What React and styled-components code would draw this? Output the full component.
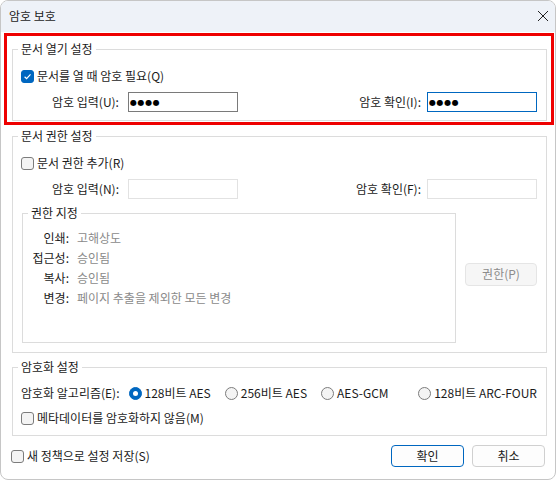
import React from 'react';
import styled, { createGlobalStyle } from 'styled-components';

const Global = createGlobalStyle`
  html, body { margin: 0; padding: 0; background: #ffffff; }
  body {
    font-family: "Noto Sans CJK KR", "Noto Sans", sans-serif;
    font-size: 12px;
    color: #1b1b1b;
  }
  * { box-sizing: border-box; }
`;

const Window = styled.div`
  position: relative;
  width: 556px;
  height: 480px;
  border: 1px solid #c6c6c6;
  border-radius: 8px;
  overflow: hidden;
  background: #ffffff;
  display: flex;
  flex-direction: column;
`;

const TitleBar = styled.div`
  height: 31px;
  flex: none;
  background: #eef2f8;
  display: flex;
  align-items: center;
  justify-content: space-between;
  padding: 0 6px 0 8px;
  font-size: 12px;
  line-height: 16px;
  color: #1b1b1b;
`;

const Title = styled.span`
  margin-top: -1px;
`;

const CloseIcon = () => (
  <svg width="12" height="12" viewBox="0 0 12 12" style={{ marginTop: -2 }}>
    <path d="M1 1 L11 11 M11 1 L1 11" stroke="#222" strokeWidth="1" fill="none" />
  </svg>
);

const Body = styled.div`
  display: flex;
  flex-direction: column;
  padding: 9px 8px 0 11px;
`;

const Group = styled.fieldset`
  margin: ${p => p.$mt || 0}px 0 0 ${p => p.$ml || 0}px;
  border: 1px solid #dcdcdc;
  padding: ${p => p.$pt}px 9px ${p => p.$pb}px 8px;
  min-width: 0;
  width: ${p => (p.$w ? `${p.$w}px` : 'auto')};
  display: flex;
  flex-direction: column;
`;

const Legend = styled.legend`
  margin-left: -3px;
  padding: 0 3px;
  font-size: 12px;
  line-height: 16px;
  color: #1b1b1b;
`;

const Row = styled.div`
  height: 20px;
  margin-top: ${p => p.$mt || 0}px;
  display: flex;
  align-items: center;
  justify-content: ${p => p.$justify || 'flex-start'};
  line-height: 16px;
  white-space: nowrap;
`;

const BoxLabel = styled.label`
  display: flex;
  align-items: center;
  gap: 3px;
  margin-left: ${p => p.$ml || 0}px;
  color: ${p => (p.$muted ? '#8a8a8a' : '#1b1b1b')};
`;

const CheckBox = styled.span`
  width: 13px;
  height: 13px;
  border-radius: 3px;
  flex: none;
  display: inline-flex;
  align-items: center;
  justify-content: center;
  background: ${p => (p.$on ? '#0067c0' : '#f4f4f4')};
  border: 1px solid ${p => (p.$on ? '#0067c0' : '#7c7c7c')};
`;

const Check = ({ on }) => (
  <CheckBox $on={on}>
    {on && (
      <svg width="9" height="9" viewBox="0 0 9 9">
        <path d="M1.6 4.7 L3.6 6.6 L7.5 2.4" stroke="#fff" strokeWidth="1.2" fill="none" />
      </svg>
    )}
  </CheckBox>
);

const RadioDot = styled.span`
  width: 13px;
  height: 13px;
  border-radius: 50%;
  flex: none;
  display: inline-flex;
  align-items: center;
  justify-content: center;
  background: ${p => (p.$on ? '#0067c0' : '#f4f4f4')};
  border: 1px solid ${p => (p.$on ? '#0067c0' : '#7c7c7c')};
  &::after {
    content: '';
    display: ${p => (p.$on ? 'block' : 'none')};
    width: 5px;
    height: 5px;
    border-radius: 50%;
    background: #ffffff;
  }
`;

const FieldPair = styled.div`
  display: flex;
  align-items: center;
  padding-left: ${p => p.$pl || 0}px;
`;

const FieldLabel = styled.span`
  width: ${p => (p.$w ? `${p.$w}px` : 'auto')};
  margin-right: ${p => p.$gap || 0}px;
`;

const Input = styled.input`
  width: 110px;
  height: 20px;
  margin: 0;
  padding: 0 0 0 1px;
  border: 1px solid ${p => (p.$focus ? '#0067c0' : p.disabled ? '#e2e2e2' : '#7a7a7a')};
  background: #ffffff;
  font-family: "DejaVu Sans", sans-serif;
  font-size: 8px;
  letter-spacing: 0.6px;
  color: #000000;
  outline: none;
`;

const PermArea = styled.div`
  margin-top: 6px;
  display: flex;
  align-items: center;
  justify-content: space-between;
`;

const PermGrid = styled.div`
  display: grid;
  grid-template-columns: 38px auto;
  grid-auto-rows: 20px;
  column-gap: 8px;
  align-items: center;
  line-height: 16px;
  white-space: nowrap;
`;

const PermKey = styled.span`
  text-align: right;
  color: #1b1b1b;
`;

const PermValue = styled.span`
  color: #8a8a8a;
`;

const Button = styled.button`
  width: ${p => p.$w || 73}px;
  height: ${p => p.$h || 22}px;
  margin: 0;
  padding: 0 0 1px;
  border-radius: 4px;
  border: 1px solid ${p => (p.$primary ? '#0067c0' : p.disabled ? '#e5e5e5' : '#d0d0d0')};
  background: ${p => (p.disabled ? '#f6f6f6' : '#fdfdfd')};
  color: ${p => (p.disabled ? '#8c8c8c' : '#1b1b1b')};
  font-family: "Noto Sans CJK KR", "Noto Sans", sans-serif;
  font-size: 12px;
  line-height: 16px;
`;

const RadioGroup = styled.div`
  flex: 1;
  display: flex;
  align-items: center;
  gap: 14px;
  margin-left: 9px;
  & > :last-child { margin-left: auto; }
`;

const Footer = styled.div`
  margin-top: 9px;
  padding: 0 10px 0 10px;
  height: 22px;
  display: flex;
  align-items: center;
  justify-content: space-between;
  line-height: 16px;
  white-space: nowrap;
`;

const Buttons = styled.div`
  display: flex;
  gap: 8px;
`;

const Highlight = styled.div`
  position: absolute;
  left: 3px;
  top: 32px;
  width: 550px;
  height: 92px;
  border: 3px solid #ee0000;
  pointer-events: none;
`;

const perms = [
  ['인쇄:', '고해상도'],
  ['접근성:', '승인됨'],
  ['복사:', '승인됨'],
  ['변경:', '페이지 추출을 제외한 모든 변경'],
];

const radios = [
  ['128비트 AES', true],
  ['256비트 AES', false],
  ['AES-GCM', false],
  ['128비트 ARC-FOUR', false],
];

export default function App() {
  return (
    <>
      <Global />
      <Window>
        <TitleBar>
          <Title>암호 보호</Title>
          <CloseIcon />
        </TitleBar>
        <Body>
          <Group $pt={9} $pb={8}>
            <Legend>문서 열기 설정</Legend>
            <Row>
              <BoxLabel>
                <Check on />
                문서를 열 때 암호 필요(Q)
              </BoxLabel>
            </Row>
            <Row $mt={6} $justify="space-between">
              <FieldPair $pl={31}>
                <FieldLabel $w={76}>암호 입력(U):</FieldLabel>
                <Input readOnly value="●●●●" />
              </FieldPair>
              <FieldPair>
                <FieldLabel $gap={6}>암호 확인(I):</FieldLabel>
                <Input readOnly value="●●●●" $focus />
              </FieldPair>
            </Row>
          </Group>

          <Group $mt={7} $pt={9} $pb={9}>
            <Legend>문서 권한 설정</Legend>
            <Row>
              <BoxLabel>
                <Check />
                문서 권한 추가(R)
              </BoxLabel>
            </Row>
            <Row $mt={6} $justify="space-between">
              <FieldPair $pl={31}>
                <FieldLabel $w={76}>암호 입력(N):</FieldLabel>
                <Input disabled value="" />
              </FieldPair>
              <FieldPair>
                <FieldLabel $gap={6}>암호 확인(F):</FieldLabel>
                <Input disabled value="" />
              </FieldPair>
            </Row>
            <PermArea>
              <Group $ml={1} $w={434} $pt={7} $pb={34}>
                <Legend>권한 지정</Legend>
                <PermGrid>
                  {perms.map(([k, v]) => (
                    <React.Fragment key={k}>
                      <PermKey>{k}</PermKey>
                      <PermValue>{v}</PermValue>
                    </React.Fragment>
                  ))}
                </PermGrid>
              </Group>
              <Button disabled $w={72} $h={23}>권한(P)</Button>
            </PermArea>
          </Group>

          <Group $mt={6} $pt={8} $pb={7}>
            <Legend>암호화 설정</Legend>
            <Row>
              <span>암호화 알고리즘(E):</span>
              <RadioGroup>
                {radios.map(([t, on]) => (
                  <BoxLabel key={t}>
                    <RadioDot $on={on} />
                    {t}
                  </BoxLabel>
                ))}
              </RadioGroup>
            </Row>
            <Row $mt={5}>
              <BoxLabel>
                <Check />
                메타데이터를 암호화하지 않음(M)
              </BoxLabel>
            </Row>
          </Group>
        </Body>
        <Footer>
          <BoxLabel>
            <Check />
            새 정책으로 설정 저장(S)
          </BoxLabel>
          <Buttons>
            <Button $primary>확인</Button>
            <Button>취소</Button>
          </Buttons>
        </Footer>
        <Highlight />
      </Window>
    </>
  );
}
